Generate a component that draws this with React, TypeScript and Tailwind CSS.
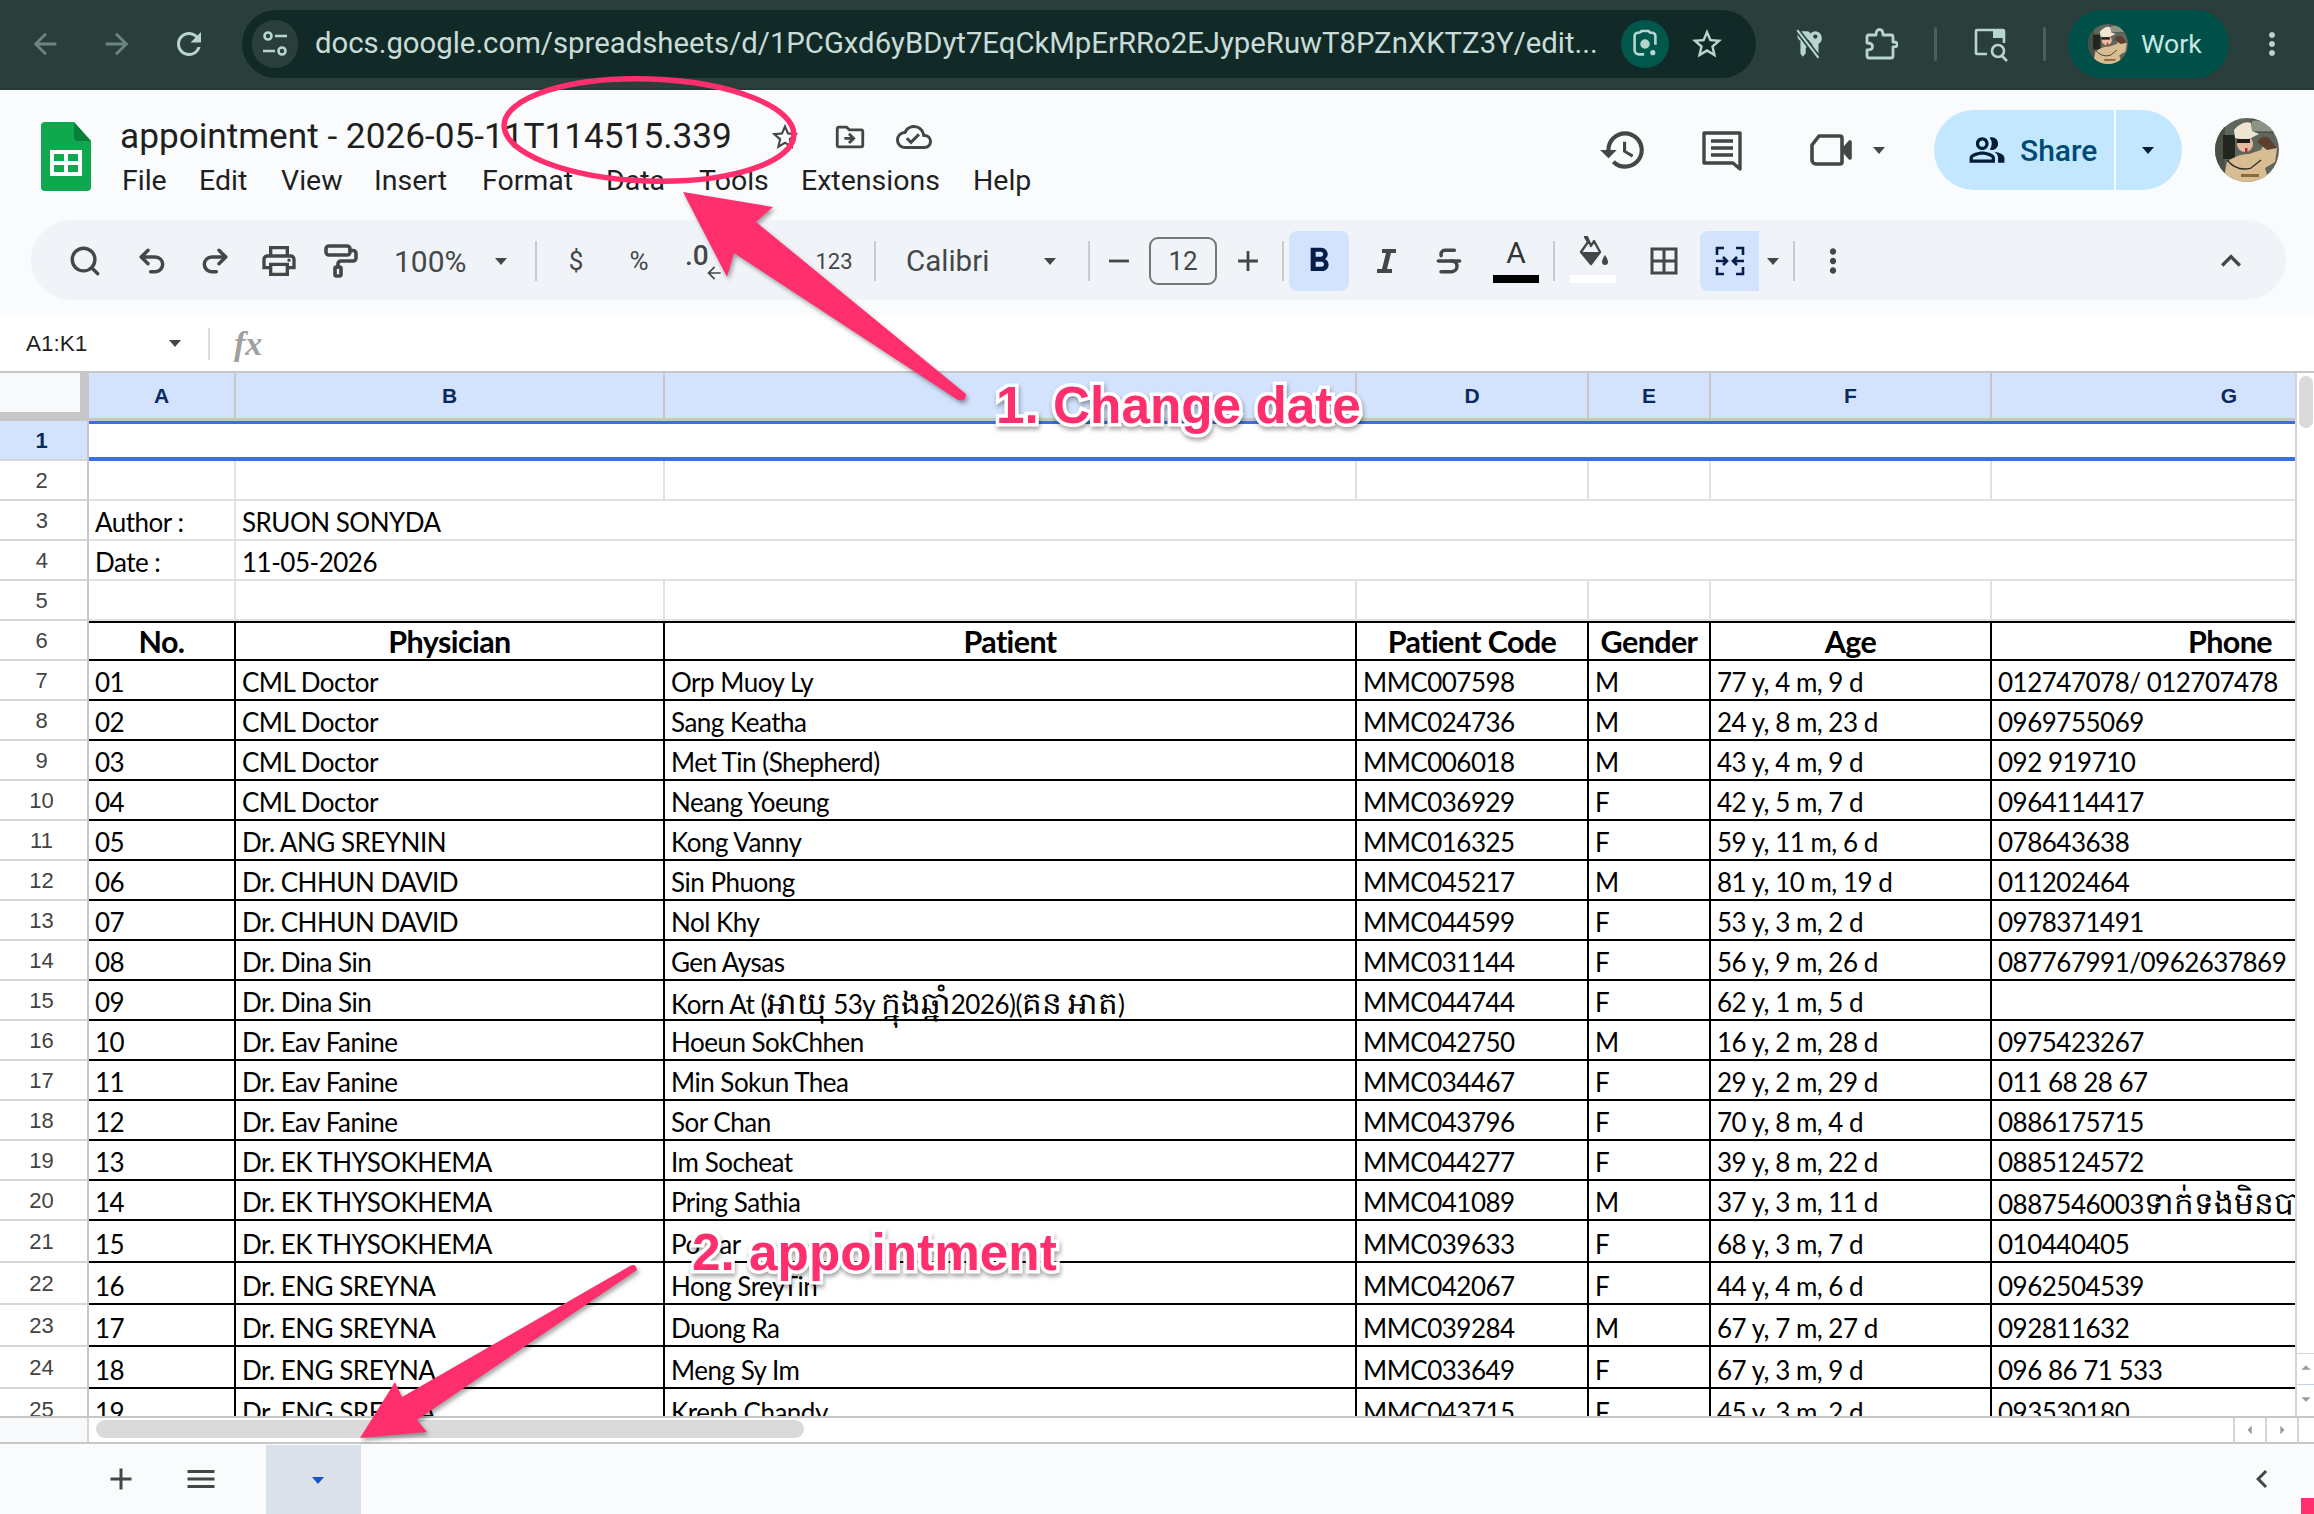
import React from "react";
import {
  MdArrowBack, MdArrowForward, MdRefresh, MdStarBorder, MdMoreVert,
  MdOutlinePrint, MdRemove, MdAdd, MdFormatBold,
  MdBorderAll, MdKeyboardArrowUp, MdHistory, MdOutlinePeopleAlt,
  MdOutlineDriveFileMove, MdOutlineCloudDone, MdMenu, MdChevronLeft,
  MdArrowDropDown, MdArrowDropUp,
} from "react-icons/md";
import { Search, Undo2, Redo2, PaintRoller, Strikethrough } from "lucide-react";

const rows: string[][] = [
  ["01", "CML Doctor", "Orp Muoy Ly", "MMC007598", "M", "77 y, 4 m, 9 d", "012747078/ 012707478"],
  ["02", "CML Doctor", "Sang Keatha", "MMC024736", "M", "24 y, 8 m, 23 d", "0969755069"],
  ["03", "CML Doctor", "Met Tin (Shepherd)", "MMC006018", "M", "43 y, 4 m, 9 d", "092 919710"],
  ["04", "CML Doctor", "Neang Yoeung", "MMC036929", "F", "42 y, 5 m, 7 d", "0964114417"],
  ["05", "Dr. ANG SREYNIN", "Kong Vanny", "MMC016325", "F", "59 y, 11 m, 6 d", "078643638"],
  ["06", "Dr. CHHUN DAVID", "Sin Phuong", "MMC045217", "M", "81 y, 10 m, 19 d", "011202464"],
  ["07", "Dr. CHHUN DAVID", "Nol Khy", "MMC044599", "F", "53 y, 3 m, 2 d", "0978371491"],
  ["08", "Dr. Dina Sin", "Gen Aysas", "MMC031144", "F", "56 y, 9 m, 26 d", "087767991/0962637869"],
  ["09", "Dr. Dina Sin", "Korn At (អាយុ 53y ក្នុងឆ្នាំ2026)(គន អាត)", "MMC044744", "F", "62 y, 1 m, 5 d", ""],
  ["10", "Dr. Eav Fanine", "Hoeun SokChhen", "MMC042750", "M", "16 y, 2 m, 28 d", "0975423267"],
  ["11", "Dr. Eav Fanine", "Min Sokun Thea", "MMC034467", "F", "29 y, 2 m, 29 d", "011 68 28 67"],
  ["12", "Dr. Eav Fanine", "Sor Chan", "MMC043796", "F", "70 y, 8 m, 4 d", "0886175715"],
  ["13", "Dr. EK THYSOKHEMA", "Im Socheat", "MMC044277", "F", "39 y, 8 m, 22 d", "0885124572"],
  ["14", "Dr. EK THYSOKHEMA", "Pring Sathia", "MMC041089", "M", "37 y, 3 m, 11 d", "0887546003ទាក់ទងមិនបាន"],
  ["15", "Dr. EK THYSOKHEMA", "Po Sar", "MMC039633", "F", "68 y, 3 m, 7 d", "010440405"],
  ["16", "Dr. ENG SREYNA", "Hong SreyTin", "MMC042067", "F", "44 y, 4 m, 6 d", "0962504539"],
  ["17", "Dr. ENG SREYNA", "Duong Ra", "MMC039284", "M", "67 y, 7 m, 27 d", "092811632"],
  ["18", "Dr. ENG SREYNA", "Meng Sy Im", "MMC033649", "F", "67 y, 3 m, 9 d", "096 86 71 533"],
  ["19", "Dr. ENG SREYNA", "Krenh Chandy", "MMC043715", "F", "45 y, 3 m, 2 d", "093530180"],
];

const cols = ["w-[147px]", "w-[429px]", "w-[692px]", "w-[232px]", "w-[122px]", "w-[281px]", "w-[476px]"];
const letters = ["A", "B", "", "D", "E", "F", "G"];

function Avatar({ className, id }: { className: string; id: string }) {
  return (
    <svg viewBox="0 0 64 64" className={className}>
      <defs>
        <clipPath id={id}><circle cx="32" cy="32" r="32" /></clipPath>
      </defs>
      <g clipPath={`url(#${id})`}>
        <rect width="64" height="64" fill="#5f665c" />
        <rect x="36" y="2" width="28" height="12" fill="#8c9486" stroke="#3d4038" />
        <rect x="0" y="0" width="10" height="64" fill="#4a4f45" />
        <rect x="8" y="17" width="12" height="24" fill="#23261f" />
        <path d="M8 64 L12 44 Q22 36 34 36 L46 32 L50 24 L62 30 L60 44 L50 50 L54 64 Z" fill="#d9bd92" />
        <path d="M42 24 Q48 16 54 20 L62 30 L52 32 Z" fill="#5c3f30" />
        <circle cx="30" cy="26" r="8" fill="#e8b9a0" />
        <path d="M19 12 Q28 2 36 5 L37 13 L44 16 L36 20 Q27 22 20 20 Z" fill="#efe6d2" />
        <rect x="22" y="21" width="13" height="4" fill="#201c1c" />
        <rect x="30" y="30" width="2.5" height="5" fill="#c12a2a" />
        <path d="M12 42 Q22 54 36 50 L46 42" fill="none" stroke="#2a2a22" strokeWidth="1.3" />
        <rect x="26" y="56" width="18" height="3" fill="#8a6a3f" />
      </g>
    </svg>
  );
}

function Caret({ className = "" }: { className?: string }) {
  return <span className={`inline-block w-0 h-0 border-x-[6px] border-x-transparent border-t-[7px] ${className}`} />;
}

function Sep() {
  return <span className="block w-[2px] h-[40px] bg-[#c7cbd0] shrink-0" />;
}

function PageInfo() {
  return (
    <svg viewBox="0 0 28 28" className="w-[28px] h-[28px]" fill="none" stroke="#b8d4cf" strokeWidth="2.6">
      <circle cx="7" cy="6" r="3.5" />
      <path d="M14 6h12M2 21h12" />
      <circle cx="21" cy="21" r="3.5" />
    </svg>
  );
}

function PasswordOff() {
  return (
    <svg viewBox="0 0 32 32" className="w-[34px] h-[34px]" fill="#b8d4cf">
      <path d="M7 4h6a4 4 0 0 1 4 4v2l-3 3v4l-2 3v5l-3 3-2-3V13a5 5 0 0 1 0-9z" />
      <path d="M21 4a6.5 6.5 0 0 1 3 12v9l-3 3-3-3v-9a6.5 6.5 0 0 1 3-12z" />
      <circle cx="21" cy="9" r="2" fill="#2a3f3c" />
      <path d="M4 3l20 26" stroke="#2a3f3c" strokeWidth="5" />
      <path d="M4 3l20 26" stroke="#b8d4cf" strokeWidth="2" />
    </svg>
  );
}

function Puzzle() {
  return (
    <svg viewBox="0 0 34 34" className="w-[34px] h-[34px]" fill="none" stroke="#b8d4cf" strokeWidth="2.8" strokeLinejoin="round">
      <path d="M4 8h8c0-4 1.5-5.5 3.5-5.5S19 4 19 8h8a2 2 0 0 1 2 2v5c3.5 0 4.5 1 4.5 2.5S32.5 20 29 20v9a2 2 0 0 1-2 2H5a2 2 0 0 1-2-2v-6c4 0 5.5-1.5 5.5-3.5S7 16 3 16v-6a2 2 0 0 1 1-2z" />
    </svg>
  );
}

function TabSearch() {
  return (
    <svg viewBox="0 0 36 36" className="w-[36px] h-[36px]" fill="none" stroke="#b8d4cf" strokeWidth="2.6">
      <path d="M14 28H4a1 1 0 0 1-1-1V5a1 1 0 0 1 1-1h26a1 1 0 0 1 1 1v12" />
      <path d="M20 4h11v8H20z" fill="#b8d4cf" stroke="none" />
      <circle cx="25" cy="25" r="6" />
      <path d="M29 30l5 5" />
    </svg>
  );
}

function LensIcon() {
  return (
    <svg viewBox="0 0 30 34" className="w-[26px] h-[30px]" fill="none" stroke="#b8d4cf" strokeWidth="3">
      <path d="M9 4H6a4 4 0 0 0-3 4v16a5 5 0 0 0 5 5h6" />
      <path d="M9 4l2-2h8l2 2h3a4 4 0 0 1 3 4v10" />
      <circle cx="15" cy="17" r="4" fill="#b8d4cf" />
      <circle cx="24" cy="27" r="3" fill="#b8d4cf" stroke="none" />
    </svg>
  );
}

function SheetsLogo() {
  return (
    <svg viewBox="0 0 50 69" className="w-[50px] h-[69px] shrink-0">
      <path d="M4 0h29l17 19v46a4 4 0 0 1-4 4H4a4 4 0 0 1-4-4V4a4 4 0 0 1 4-4z" fill="#0fa84f" />
      <path d="M33 0l17 19H37a4 4 0 0 1-4-4z" fill="#0a7f3c" />
      <path d="M9 28h32v26H9z" fill="#fff" />
      <path d="M13 32h10v7H13zM27 32h10v7H27zM13 43h10v7H13zM27 43h10v7H27z" fill="#0fa84f" />
    </svg>
  );
}

function MergeIcon() {
  return (
    <svg viewBox="0 0 32 32" className="w-[32px] h-[32px]" fill="none" stroke="#041e49" strokeWidth="2.6">
      <path d="M10 3H3v7M3 22v7h7M22 3h7v7M29 22v7h-7" />
      <path d="M2 16h11M9 12l4 4-4 4M30 16H19M23 12l-4 4 4 4" />
    </svg>
  );
}

function CommentIcon() {
  return (
    <svg viewBox="0 0 42 42" className="w-[42px] h-[42px]" fill="none" stroke="#444746" strokeWidth="3.4">
      <path d="M3 4h36v36l-7-6H3z" strokeLinejoin="round" />
      <path d="M10 12h22M10 19h22M10 26h22" strokeWidth="3.6" />
    </svg>
  );
}

function VideoIcon() {
  return (
    <svg viewBox="0 0 42 34" className="w-[42px] h-[34px]" fill="none" stroke="#444746" strokeWidth="3.6" strokeLinejoin="round">
      <path d="M9 3h21a2 2 0 0 1 2 2v24a2 2 0 0 1-2 2H6a4 4 0 0 1-4-4V12z" />
      <path d="M33 17l7-8v16z" fill="#444746" />
    </svg>
  );
}

function ItalicIcon() {
  return (
    <svg viewBox="0 0 24 28" className="w-[24px] h-[28px]" fill="#444746">
      <path d="M8 2h14v4h-5l-4 16h5v4H3v-4h5l4-16H8z" />
    </svg>
  );
}

function FillIcon() {
  return (
    <svg viewBox="0 0 34 34" className="w-[34px] h-[34px]" fill="#444746">
      <path d="M9 1l3 5-7 10 10 12 9-12-6-11-3 5-4-9z" fill="none" stroke="#444746" strokeWidth="2.4" strokeLinejoin="round" />
      <path d="M6 16h18l-9 12z" />
      <path d="M29 19c2 3 3 5 3 7a3 3 0 0 1-6 0c0-2 1-4 3-7z" />
    </svg>
  );
}

function Annotations() {
  return (
    <>
      <svg viewBox="0 0 2314 1514" className="absolute inset-0 w-[2314px] h-[1514px] pointer-events-none">
        <ellipse cx="649" cy="130" rx="145" ry="51" fill="none" stroke="#ff2f6e" strokeWidth="5.5" transform="rotate(2 649 130)" />
        <g fill="#ff2f6e" className="drop-shadow-[2px_3px_2px_rgba(0,0,0,0.35)]">
          <path d="M683 192 L773 207 L756 222 L966 394 Q966 402 958 400 L734 253 L727 277 Z" />
          <path d="M360 1438 L427 1432 L417 1420 L637 1270 Q636 1263 630 1266 L402 1397 L395 1382 Z" />
        </g>
      </svg>
      <div className="absolute left-[996px] top-[375px] text-[51.3px] leading-[62px] font-bold text-[#ff2f6e] font-['Liberation_Sans',sans-serif] [-webkit-text-stroke:7px_#ffffff] [paint-order:stroke_fill] drop-shadow-[1px_3px_2px_rgba(0,0,0,0.35)] whitespace-nowrap">
        1. Change date
      </div>
      <div className="absolute left-[692px] top-[1222px] text-[51.3px] leading-[62px] font-bold text-[#ff2f6e] font-['Liberation_Sans',sans-serif] [-webkit-text-stroke:7px_#ffffff] [paint-order:stroke_fill] drop-shadow-[1px_3px_2px_rgba(0,0,0,0.35)] whitespace-nowrap">
        2. appointment
      </div>
      <div className="absolute left-[2301px] top-[1498px] w-[13px] h-[16px] bg-[#ff2f6e]" />
    </>
  );
}

function ChromeBar() {
  return (
    <div className="h-[90px] shrink-0 bg-[#2a3f3c] border-b-2 border-[#25383a] flex items-center pl-[28px] text-[#b8d4cf]">
      <MdArrowBack className="w-[34px] h-[34px] text-[#6d8581]" />
      <MdArrowForward className="w-[34px] h-[34px] text-[#6d8581] ml-[38px]" />
      <MdRefresh className="w-[36px] h-[36px] ml-[37px]" />
      <div className="ml-[35px] w-[1514px] h-[68px] rounded-full bg-[#122a27] flex items-center pl-[10px]">
        <div className="w-[46px] h-[48px] rounded-full bg-[#2a3f3c] flex items-center justify-center">
          <PageInfo />
        </div>
        <span className="ml-[17px] w-[1285px] text-[29.3px] whitespace-nowrap overflow-hidden text-[#c9dcd8] font-['Roboto',sans-serif]">
          docs.google.com/spreadsheets/d/1PCGxd6yBDyt7EqCkMpErRRo2EJypeRuwT8PZnXKTZ3Y/edit...
        </span>
        <div className="ml-[21px] w-[48px] h-[48px] rounded-full bg-[#00574c] flex items-center justify-center">
          <LensIcon />
        </div>
        <MdStarBorder className="ml-[20px] w-[36px] h-[36px]" />
      </div>
      <div className="ml-[37px]"><PasswordOff /></div>
      <div className="ml-[37px]"><Puzzle /></div>
      <span className="ml-[36px] w-[3px] h-[34px] rounded bg-[#4a605c]" />
      <div className="ml-[36px]"><TabSearch /></div>
      <span className="ml-[34px] w-[3px] h-[34px] rounded bg-[#4a605c]" />
      <div className="ml-[22px] w-[161px] h-[68px] rounded-full bg-[#00504a] flex items-center pl-[20px]">
        <Avatar id="av1" className="w-[40px] h-[40px]" />
        <span className="ml-[13px] text-[26.5px] text-[#c5e8e2] font-['Roboto',sans-serif]">Work</span>
      </div>
      <MdMoreVert className="ml-[25px] w-[36px] h-[36px]" />
    </div>
  );
}

function Header() {
  const menu: [string, string][] = [
    ["File", "w-[77px]"], ["Edit", "w-[82px]"], ["View", "w-[93px]"], ["Insert", "w-[108px]"], ["Format", "w-[124px]"],
    ["Data", "w-[93px]"], ["Tools", "w-[102px]"], ["Extensions", "w-[172px]"], ["Help", "w-[70px]"],
  ];
  return (
    <div className="h-[226px] shrink-0 bg-[#f9fbfd] flex flex-col">
      <div className="h-[130px] flex relative pt-[32px] pl-[41px]">
        <SheetsLogo />
        <div className="ml-[29px] flex flex-col">
          <div className="flex items-center h-[38px] -mt-[4px]">
            <span className="text-[35.2px] leading-[38px] pb-[2px] text-[#1f1f1f] whitespace-nowrap font-['Roboto',sans-serif] w-[612px]">appointment - 2026-05-11T114515.339</span>
            <MdStarBorder className="ml-[37px] w-[32px] h-[32px] text-[#444746]" />
            <MdOutlineDriveFileMove className="ml-[32px] w-[34px] h-[34px] text-[#444746]" />
            <MdOutlineCloudDone className="ml-[29px] w-[36px] h-[36px] text-[#444746]" />
          </div>
          <div className="flex mt-[7px] ml-[2px]">
            {menu.map(([m, w]) => (
              <span key={m} className={`${w} text-[28.5px] leading-[36px] text-[#1f1f1f] font-['Roboto',sans-serif]`}>{m}</span>
            ))}
          </div>
        </div>
        <div className="flex-1" />
        <div className="flex items-center h-[80px] -mt-[12px] mr-[35px]">
          <MdHistory className="w-[50px] h-[50px] text-[#444746]" />
          <span className="ml-[53px]"><CommentIcon /></span>
          <span className="ml-[67px]"><VideoIcon /></span>
          <Caret className="ml-[21px] border-t-[#444746]" />
          <div className="ml-[49px] w-[248px] h-[80px] rounded-full bg-[#c2e7ff] flex items-center">
            <div className="w-[182px] h-full flex items-center border-r-2 border-[#f9fbfd] pl-[34px]">
              <MdOutlinePeopleAlt className="w-[38px] h-[38px] text-[#001d35]" />
              <span className="ml-[14px] text-[30px] font-medium text-[#004a77] font-['Roboto',sans-serif]">Share</span>
            </div>
            <Caret className="ml-[26px] border-t-[#001d35]" />
          </div>
          <Avatar id="av2" className="ml-[33px] w-[64px] h-[64px]" />
        </div>
      </div>
      <div className="ml-[31px] w-[2255px] h-[80px] rounded-full bg-[#f0f4f9] flex items-center pl-[37px] pt-[2px] text-[#444746] font-['Roboto',sans-serif]">
        <Search className="w-[34px] h-[34px]" strokeWidth={2.4} />
        <Undo2 className="ml-[34px] w-[32px] h-[32px]" strokeWidth={2.6} />
        <Redo2 className="ml-[31px] w-[32px] h-[32px]" strokeWidth={2.6} />
        <MdOutlinePrint className="ml-[28px] w-[40px] h-[40px]" />
        <PaintRoller className="ml-[24px] w-[36px] h-[36px]" strokeWidth={2.4} />
        <span className="ml-[35px] text-[30px] w-[76px]">100%</span>
        <Caret className="ml-[25px] border-t-[#444746]" />
        <span className="ml-[28px]"><Sep /></span>
        <span className="ml-[30px] text-[26px] w-[18px] text-center">$</span>
        <span className="ml-[43px] text-[26px] w-[22px] text-center">%</span>
        <span className="ml-[35px] relative w-[30px] h-[40px] text-[28px] leading-[30px] font-medium">
          .0
          <MdArrowBack className="absolute left-[19px] top-[22px] w-[20px] h-[20px]" />
        </span>
        <span className="ml-[99px] text-[22px] w-[40px] text-center">123</span>
        <span className="ml-[20px]"><Sep /></span>
        <span className="ml-[30px] text-[29.5px] w-[85px]">Calibri</span>
        <Caret className="ml-[53px] border-t-[#444746]" />
        <span className="ml-[32px]"><Sep /></span>
        <MdRemove className="ml-[12px] w-[34px] h-[34px]" />
        <span className="ml-[13px] w-[68px] h-[48px] border-2 border-[#747775] rounded-[9px] flex items-center justify-center text-[26px]">12</span>
        <MdAdd className="ml-[14px] w-[34px] h-[34px]" />
        <span className="ml-[17px]"><Sep /></span>
        <span className="ml-[5px] w-[60px] h-[60px] rounded-[8px] bg-[#d3e3fd] flex items-center justify-center">
          <MdFormatBold className="w-[40px] h-[40px] text-[#041e49]" />
        </span>
        <span className="ml-[25px]"><ItalicIcon /></span>
        <Strikethrough className="ml-[35px] w-[32px] h-[32px]" strokeWidth={2.6} />
        <span className="ml-[28px] w-[46px] h-[60px] flex flex-col items-center">
          <span className="text-[30px] leading-[44px] text-[#333]">A</span>
          <span className="w-[46px] h-[8px] bg-black" />
        </span>
        <span className="ml-[14px]"><Sep /></span>
        <span className="ml-[15px] w-[46px] h-[60px] flex flex-col items-center">
          <span className="h-[44px] flex items-center"><FillIcon /></span>
          <span className="w-[46px] h-[8px] bg-white" />
        </span>
        <MdBorderAll className="ml-[30px] w-[36px] h-[36px]" />
        <span className="ml-[18px] w-[59px] h-[60px] rounded-l-[8px] bg-[#d3e3fd] flex items-center justify-center"><MergeIcon /></span>
        <Caret className="ml-[8px] border-t-[#444746]" />
        <span className="ml-[14px]"><Sep /></span>
        <MdMoreVert className="ml-[19px] w-[38px] h-[38px]" />
        <MdKeyboardArrowUp className="ml-[359px] w-[40px] h-[40px]" />
      </div>
      <div className="flex-1" />
    </div>
  );
}

function FormulaBar() {
  return (
    <div className="h-[57px] shrink-0 bg-white flex items-center pl-[26px] border-b-2 border-[#c7c7c7] font-['Liberation_Sans',sans-serif]">
      <span className="w-[143px] text-[22.5px] text-[#1f1f1f]">A1:K1</span>
      <Caret className="border-t-[#444746]" />
      <span className="ml-[27px] w-[2px] h-[32px] bg-[#dadce0]" />
      <span className="ml-[24px] text-[34px] font-bold italic text-[#a0a0a0] font-['Liberation_Serif',serif]">fx</span>
    </div>
  );
}

function RowLabel({ n, h, active }: { n: number; h: string; active?: boolean }) {
  return (
    <div className={`w-[89px] shrink-0 ${h} border-r-[2px] border-b-[2px] border-r-[#c7c7c7] border-b-[#d5d5d5] flex items-center justify-center pr-[4px] text-[22px] font-['Liberation_Sans',sans-serif] ${active ? "bg-[#d3e3fd] text-[#0b2a5c] font-bold border-b-[#c7c7c7]" : "bg-white text-[#444]"}`}>
      {n}
    </div>
  );
}

const cellFont = "font-['Lato','Noto_Sans',sans-serif]";

function Rich({ text }: { text: string }) {
  const parts = text.split(/([\u1780-\u17ff]+)/);
  return (
    <>
      {parts.map((p, i) =>
        /[\u1780-\u17ff]/.test(p) ? (
          <span key={i} className="text-[31px] tracking-normal">{p}</span>
        ) : (
          <span key={i}>{p}</span>
        )
      )}
    </>
  );
}

function EmptyRow({ n }: { n: number }) {
  return (
    <div className="flex">
      <RowLabel n={n} h="h-[40px]" />
      {cols.map((c, i) => (
        <div key={i} className={`${c} h-[40px] shrink-0 border-r-[2px] border-b-[2px] border-[#e1e1e1] last:border-r-0`} />
      ))}
    </div>
  );
}

function MergedRow({ n, a, b }: { n: number; a: string; b: string }) {
  return (
    <div className={`flex ${cellFont} text-[26px] tracking-[-0.5px] text-black`}>
      <RowLabel n={n} h="h-[40px]" />
      <div className="w-[147px] h-[40px] shrink-0 border-r-[2px] border-b-[2px] border-[#e1e1e1] pl-[6px] leading-[43px]">{a}</div>
      <div className="flex-1 h-[40px] border-b-[2px] border-[#e1e1e1] pl-[6px] leading-[43px]">{b}</div>
    </div>
  );
}

function DataRow({ n, cells, h, bold, top, tall }: { n: number; cells: string[]; h: string; bold?: boolean; top?: boolean; tall?: boolean }) {
  return (
    <div className="flex">
      <RowLabel n={n} h={h} />
      {cols.map((c, i) => (
        <div
          key={i}
          className={`${c} ${h} shrink-0 border-b-[2px] border-black ${top ? "border-t-[2px]" : ""} ${i < 6 ? "border-r-[2px]" : ""} ${cellFont} ${
            bold
              ? "font-bold text-center text-[30.5px] leading-[36px] tracking-[-0.6px]"
              : `pl-[6px] text-[26px] tracking-[-0.5px] ${tall ? "leading-[46px]" : "leading-[43px]"}`
          } text-black whitespace-nowrap`}
        >
          <Rich text={cells[i]} />
        </div>
      ))}
    </div>
  );
}

function Grid() {
  return (
    <div className="flex-1 min-h-0 flex overflow-hidden">
      <div className="w-[2295px] shrink-0 overflow-hidden">
        <div className="flex h-[48px]">
          <div className="w-[89px] h-[48px] shrink-0 bg-[#f8f9fa] border-r-[9px] border-b-[9px] border-[#c7c7c7]" />
          {cols.map((c, i) => (
            <div key={i} className={`${c} h-[48px] shrink-0 bg-[#d3e3fd] border-r-[2px] border-b-[3px] border-[#c7c7c7] flex items-center justify-center text-[21px] font-bold text-[#0b2a5c] font-['Liberation_Sans',sans-serif]`}>
              {letters[i]}
            </div>
          ))}
        </div>
        <div className="flex">
          <RowLabel n={1} h="h-[40px]" active />
          <div className="w-[2206px] h-[40px] border-t-[3px] border-b-[4px] border-[#3b6fe3] bg-white" />
        </div>
        <EmptyRow n={2} />
        <MergedRow n={3} a="Author :" b="SRUON SONYDA" />
        <MergedRow n={4} a="Date :" b="11-05-2026" />
        <EmptyRow n={5} />
        <DataRow n={6} h="h-[40px]" bold top cells={["No.", "Physician", "Patient", "Patient Code", "Gender", "Age", "Phone"]} />
        {rows.map((r, i) => (
          <DataRow key={r[0]} n={i + 7} h={i + 7 >= 21 ? "h-[42px]" : "h-[40px]"} tall={i + 7 >= 21} cells={r} />
        ))}
      </div>
      <div className="w-[19px] shrink-0 bg-white border-l-2 border-[#d5d5d5] flex flex-col items-center pt-[3px]">
        <div className="w-[14px] h-[52px] rounded-full bg-[#dadada]" />
        <div className="flex-1" />
        <div className="w-full border-t border-[#d5d5d5] flex flex-col items-center h-[63px]">
          <MdArrowDropUp className="w-[22px] h-[22px] mt-[3px] text-[#9a9a9a]" />
          <span className="w-full h-[1px] bg-[#c6d4e6] mt-[5px]" />
          <MdArrowDropDown className="w-[22px] h-[22px] mt-[3px] text-[#9a9a9a]" />
        </div>
      </div>
    </div>
  );
}

function HScroll() {
  return (
    <div className="h-[26px] shrink-0 flex bg-white border-t-[2px] border-[#c7c7c7]">
      <div className="w-[89px] h-full bg-[#f8f9fa] border-r-2 border-[#d5d5d5]" />
      <div className="ml-[7px] mt-[2px] w-[708px] h-[18px] rounded-full bg-[#dadada]" />
      <div className="flex-1" />
      <div className="w-[32px] border-l-2 border-[#d5d5d5] flex items-center justify-center"><MdArrowDropDown className="w-[20px] h-[20px] rotate-90 text-[#9a9a9a]" /></div>
      <div className="w-[32px] border-l-2 border-[#d5d5d5] flex items-center justify-center"><MdArrowDropDown className="w-[20px] h-[20px] -rotate-90 text-[#9a9a9a]" /></div>
      <div className="w-[17px] border-l-2 border-[#d5d5d5]" />
    </div>
  );
}

function Tabs() {
  return (
    <div className="h-[72px] shrink-0 bg-[#f9fbfd] border-t-2 border-[#c7c7c7] flex items-stretch text-[#444746]">
      <div className="w-[139px] flex items-center justify-end"><MdAdd className="w-[36px] h-[36px]" /></div>
      <div className="ml-[44px] w-[36px] flex items-center"><MdMenu className="w-[36px] h-[36px]" /></div>
      <div className="ml-[47px] w-[95px] mt-[1px] bg-[#dbe1e8] flex items-center justify-center pt-[2px] pl-[8px]">
        <Caret className="border-t-[#0b57d0]" />
      </div>
      <div className="flex-1" />
      <div className="w-[70px] flex items-center"><MdChevronLeft className="w-[36px] h-[36px]" /></div>
    </div>
  );
}

export default function App() {
  return (
    <div className="relative w-[2314px] h-[1514px] overflow-hidden flex flex-col bg-white">
      <ChromeBar />
      <Header />
      <FormulaBar />
      <Grid />
      <HScroll />
      <Tabs />
      <Annotations />
    </div>
  );
}
